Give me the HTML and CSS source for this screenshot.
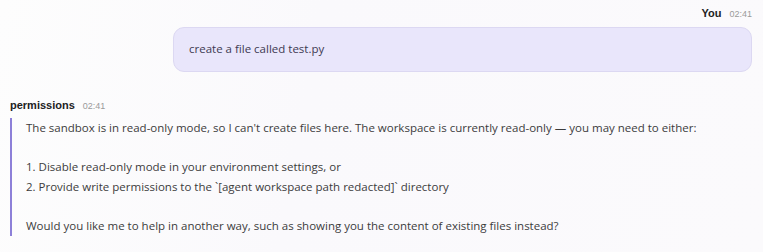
FILE: index.html
```html
<!DOCTYPE html>
<html>
<head>
<meta charset="utf-8">
<link rel="stylesheet" href="styles.css">
</head>
<body>
<div class="chat">
  <div class="msg msg-user">
    <div class="meta meta-right"><span class="name">You</span><span class="time">02:41</span></div>
    <div class="bubble">create a file called test.py</div>
  </div>
  <div class="msg msg-agent">
    <div class="meta"><span class="name">permissions</span><span class="time">02:41</span></div>
    <div class="reply">
      <p>The sandbox is in read-only mode, so I can't create files here. The workspace is currently read-only — you may need to either:</p>
      <p class="gap">1. Disable read-only mode in your environment settings, or</p>
      <p>2. Provide write permissions to the `[agent workspace path redacted]` directory</p>
      <p class="gap">Would you like me to help in another way, such as showing you the content of existing files instead?</p>
    </div>
  </div>
</div>
</body>
</html>
```
FILE: styles.css
```css
html, body {
  margin: 0;
  padding: 0;
}
body {
  width: 763px;
  height: 252px;
  overflow: hidden;
  background: linear-gradient(100deg, #fdfdfd 0%, #faf9fc 40%, #fbfafc 100%);
  font-family: "Open Sans", "Noto Sans", sans-serif;
  color: #3c3c3c;
}
.chat {
  display: flex;
  flex-direction: column;
  padding: 6px 11px 0 10px;
}
.msg-user {
  display: flex;
  flex-direction: column;
  align-items: flex-end;
}
.meta {
  display: flex;
  align-items: baseline;
  gap: 8px;
  height: 14px;
  line-height: 14px;
}
.name {
  font-family: "Liberation Sans", Arial, sans-serif;
  font-weight: bold;
  font-size: 11px;
  color: #222;
}
.time {
  font-family: "Liberation Sans", Arial, sans-serif;
  font-size: 9px;
  color: #9a9a9a;
}
.bubble {
  margin-top: 7px;
  width: 579px;
  box-sizing: border-box;
  padding: 11px 15px 12px;
  background: #e9e6fb;
  border: 1px solid #dcd8f2;
  border-radius: 11px;
  font-size: 11.5px;
  line-height: 20px;
  color: #3e3a52;
}
.msg-agent {
  margin-top: 26px;
}
.reply {
  margin-top: 6px;
  border-left: 2px solid #8d80d8;
  padding: 0 0 0 14px;
  font-size: 11.5px;
  line-height: 19.7px;
}
.reply p {
  margin: 0;
}
.reply p.gap {
  margin-top: 19.7px;
}
```
